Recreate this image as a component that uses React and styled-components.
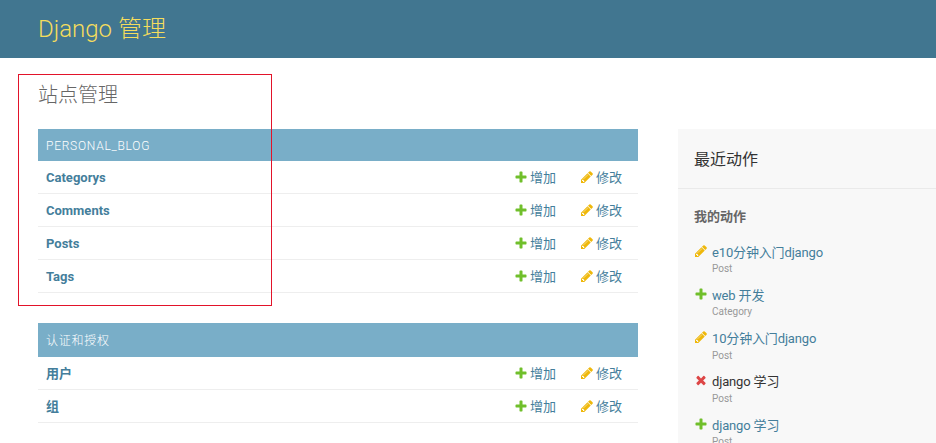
import React from "react";
import styled, { createGlobalStyle } from "styled-components";

const Global = createGlobalStyle`
  html, body { margin: 0; padding: 0; background: #fff; overflow: hidden; }
  body { font-family: Roboto, "Noto Sans CJK SC", "Lucida Grande", Verdana, Arial, sans-serif; font-size: 14px; color: #333; }
`;
const Page = styled.div`width: 936px; height: 443px; overflow: hidden; position: relative;`;
const Header = styled.header`height: 58px; background: #417690; padding: 0 38px; display: flex; align-items: center; box-sizing: border-box;`;
const Brand = styled.div`font-size: 24px; font-weight: 300; color: #f5dd5d; line-height: 1;`;
const Content = styled.main`padding: 25px 0 0 38px;`;
const Title = styled.h1`margin: 0 0 21px; font-size: 20px; font-weight: 300; color: #666; line-height: 25px;`;
const Columns = styled.div`display: flex; gap: 40px; align-items: flex-start;`;
const Main = styled.div`width: 600px; flex: none; display: flex; flex-direction: column; gap: 30px;`;
const Table = styled.section`display: flex; flex-direction: column;`;
const Caption = styled.div`background: #79aec8; color: #fff; font-size: 12px; font-weight: 300; letter-spacing: 0.75px; padding: ${p => p.$top}px 8px ${p => p.$lift}px; height: ${p => p.$h}px; box-sizing: border-box; display: flex; align-items: center;`;
const Row = styled.div`display: flex; align-items: center; height: 32px; border-bottom: 1px solid #eee; padding: 0 16px 0 8px;`;
const Model = styled.a`flex: 1; font-size: 13px; font-weight: 700; color: #447e9b; padding-bottom: ${p => p.$lift}px;`;
const Action = styled.a`display: inline-flex; align-items: center; gap: 2px; font-size: 13px; color: #447e9b; margin-left: 24px; white-space: nowrap;`;
const Label = styled.span`padding-bottom: 2px;`;
const Glyph = styled.svg`width: 14px; height: 14px; flex: none;`;
const Sidebar = styled.aside`flex: 1; background: #f8f8f8; height: 320px;`;
const SideHead = styled.h2`margin: 0; font-size: 16px; font-weight: 400; color: #333; height: 60px; box-sizing: border-box; border-bottom: 1px solid #eaeaea; padding: 3px 16px 0; display: flex; align-items: center; line-height: 1;`;
const SideBody = styled.div`padding: 20px 16px 0;`;
const SideSub = styled.h3`margin: 0 0 18.5px; font-size: 13px; font-weight: 700; color: #666; line-height: 16px;`;
const List = styled.ul`list-style: none; margin: 0; padding: 0; display: flex; flex-direction: column; gap: 10.75px;`;
const Item = styled.li`position: relative; padding-left: 18px; display: flex; flex-direction: column;`;
const ItemLink = styled.span`font-size: 13px; line-height: 18.5px; height: 17.5px; letter-spacing: -0.15px; color: ${p => p.$dark ? "#333" : "#447e9b"};`;
const ItemKind = styled.span`font-size: 10px; line-height: 15px; height: 15px; color: #999;`;
const ItemIcon = styled.svg`position: absolute; left: 0; top: 0; width: 14px; height: 14px;`;
const Mark = styled.div`position: absolute; left: 18px; top: 74px; width: 252px; height: 230px; border: 1px solid #e2132a; pointer-events: none;`;

const paths = {
  add: ["#70bf2b", "M1600 796v192q0 40-28 68t-68 28h-416v416q0 40-28 68t-68 28h-192q-40 0-68-28t-28-68v-416h-416q-40 0-68-28t-28-68v-192q0-40 28-68t68-28h416v-416q0-40 28-68t68-28h192q40 0 68 28t28 68v416h416q40 0 68 28t28 68z"],
  change: ["#efb80b", "M491 1536l91-91-235-235-91 91v107h128v128h107zm523-928q0-22-22-22-10 0-17 7l-542 542q-7 7-7 17 0 22 22 22 10 0 17-7l542-542q7-7 7-17zm-54-192l416 416-832 832h-416v-416zm683 96q0 53-37 90l-166 166-416-416 166-165q36-38 90-38 53 0 91 38l235 234q37 39 37 91z"],
  del: ["#dd4646", "M1490 1322q0 40-28 68l-136 136q-28 28-68 28t-68-28l-294-294-294 294q-28 28-68 28t-68-28l-136-136q-28-28-28-68t28-68l294-294-294-294q-28-28-28-68t28-68l136-136q28-28 68-28t68 28l294 294 294-294q28-28 68-28t68 28l136 136q28 28 28 68t-28 68l-294 294 294 294q28 28 28 68z"],
};
const Path = ({ k }) => <path fill={paths[k][0]} d={paths[k][1]} />;

const ModelRow = ({ name, lift }) => (
  <Row>
    <Model $lift={lift}>{name}</Model>
    <Action><Glyph viewBox="0 0 1792 1792"><Path k="add" /></Glyph><Label>增加</Label></Action>
    <Action><Glyph viewBox="0 0 1792 1792"><Path k="change" /></Glyph><Label>修改</Label></Action>
  </Row>
);

const recent = [
  ["change", "e10分钟入门django", "Post"],
  ["add", "web 开发", "Category"],
  ["change", "10分钟入门django", "Post"],
  ["del", "django 学习", "Post"],
  ["add", "django 学习", "Post"],
];

export default function App() {
  return (
    <Page>
      <Global />
      <Header><Brand>Django 管理</Brand></Header>
      <Content>
        <Title>站点管理</Title>
        <Columns>
          <Main>
            <Table>
              <Caption $h={32} $top={1} $lift={0}>PERSONAL_BLOG</Caption>
              {["Categorys", "Comments", "Posts", "Tags"].map(n => <ModelRow key={n} name={n} lift={0} />)}
            </Table>
            <Table>
              <Caption $h={34} $top={0} $lift={2}>认证和授权</Caption>
              {["用户", "组"].map(n => <ModelRow key={n} name={n} lift={2} />)}
            </Table>
          </Main>
          <Sidebar>
            <SideHead>最近动作</SideHead>
            <SideBody>
              <SideSub>我的动作</SideSub>
              <List>
                {recent.map(([k, t, c], i) => (
                  <Item key={i}>
                    <ItemIcon viewBox="0 0 1792 1792"><Path k={k} /></ItemIcon>
                    <ItemLink $dark={k === "del"}>{t}</ItemLink>
                    <ItemKind>{c}</ItemKind>
                  </Item>
                ))}
              </List>
            </SideBody>
          </Sidebar>
        </Columns>
      </Content>
      <Mark />
    </Page>
  );
}
